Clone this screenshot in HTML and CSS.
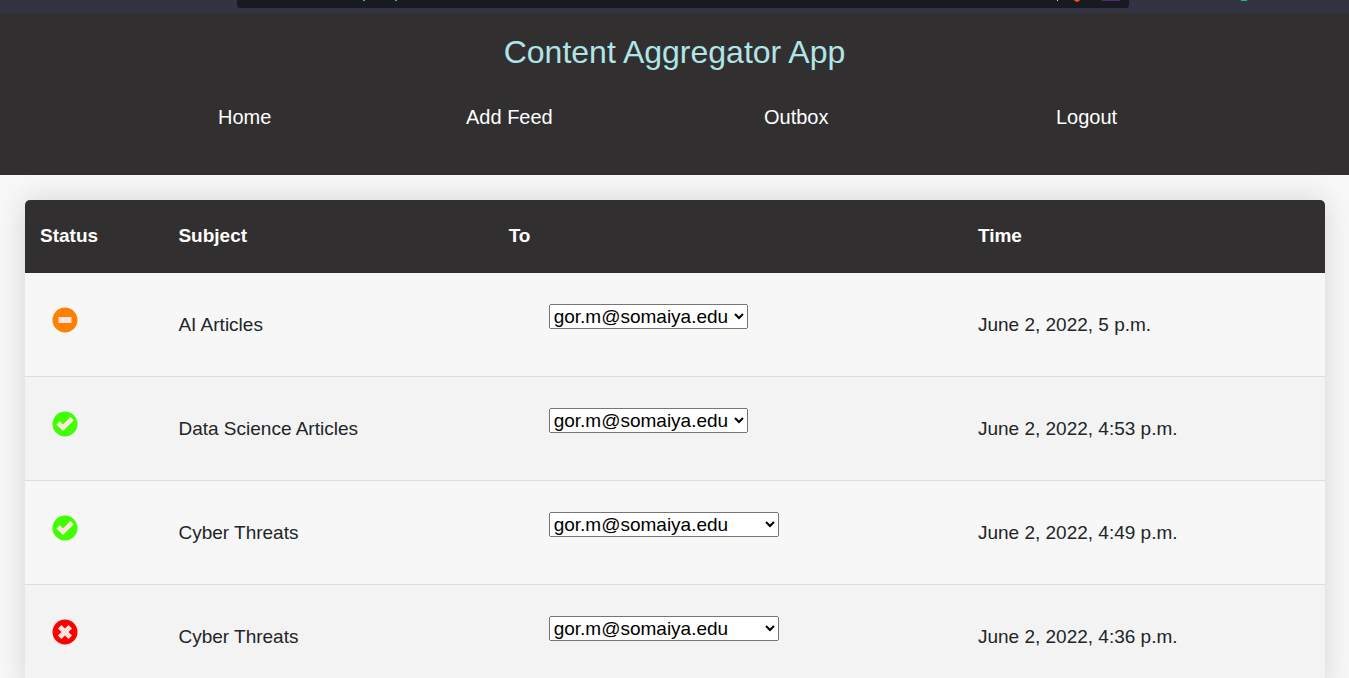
FILE: index.html
```
<!DOCTYPE html>
<html lang="en">
<head>
<meta charset="utf-8">
<title>Content Aggregator App</title>
<link rel="stylesheet" href="styles.css">
</head>
<body>
<div class="browser-bar">
  <div class="address">
    <svg class="address-marks" width="892" height="8" viewBox="0 0 892 8" aria-hidden="true">
      <path d="M126 0h2v1h-2zM158 0h2v1h-2z" fill="#8791a0"/>
      <path d="M820 0h1v1h-1z" fill="#e0e0e0"/>
      <path d="M837 0h6l-1 1-2 1-2-1z" fill="#fb5607"/>
      <path d="M865 0h18v1h-18z" fill="#4f2a75"/>
    </svg>
  </div>
  <svg class="extension" width="8" height="2" viewBox="0 0 8 2" aria-hidden="true"><path d="M0 0h8L6 1H2z" fill="#15c39a"/></svg>
</div>
<header class="header">
  <h1 class="title">Content Aggregator App</h1>
  <nav class="nav">
    <a href="#home">Home</a>
    <a href="#add">Add Feed</a>
    <a href="#outbox">Outbox</a>
    <a href="#logout">Logout</a>
  </nav>
</header>
<main class="main">
  <table class="outbox">
    <thead>
      <tr><th class="col-status">Status</th><th class="col-subject">Subject</th><th class="col-to">To</th><th>Time</th></tr>
    </thead>
    <tbody>
      <tr>
        <td><svg class="status" viewBox="0 0 26 26" role="img" aria-label="Pending"><circle cx="13" cy="13" r="12.5" fill="#ff8000"/><path d="M6.500 10h13v6h-13z" fill="#ffe4e1"/></svg></td>
        <td>AI Articles</td>
        <td><select class="recipients" aria-label="Recipients of AI Articles"><option>gor.m@somaiya.edu</option></select></td>
        <td>June 2, 2022, 5 p.m.</td>
      </tr>
      <tr>
        <td><svg class="status" viewBox="0 0 26 26" role="img" aria-label="Sent"><circle cx="13" cy="13" r="12.5" fill="#40ff00"/><path d="M4.500 13.400l3.300-3.200 3.200 3.200 7.500-7.400 3.300 3.200L11 20z" fill="#ffe4e1"/></svg></td>
        <td>Data Science Articles</td>
        <td><select class="recipients" aria-label="Recipients of Data Science Articles"><option>gor.m@somaiya.edu</option></select></td>
        <td>June 2, 2022, 4:53 p.m.</td>
      </tr>
      <tr>
        <td><svg class="status" viewBox="0 0 26 26" role="img" aria-label="Sent"><circle cx="13" cy="13" r="12.5" fill="#40ff00"/><path d="M4.500 13.400l3.300-3.200 3.200 3.200 7.500-7.400 3.300 3.200L11 20z" fill="#ffe4e1"/></svg></td>
        <td>Cyber Threats</td>
        <td><select class="recipients recipients-wide" aria-label="Recipients of Cyber Threats, 4:49 p.m."><option>gor.m@somaiya.edu</option></select></td>
        <td>June 2, 2022, 4:49 p.m.</td>
      </tr>
      <tr>
        <td><svg class="status" viewBox="0 0 26 26" role="img" aria-label="Failed"><circle cx="13" cy="13" r="12.5" fill="#ff0000"/><path d="M9.500 6L13 9.500 16.500 6 20 9.500 16.500 13 20 16.500 16.500 20 13 16.500 9.500 20 6 16.500 9.500 13 6 9.500z" fill="#ffe4e1"/></svg></td>
        <td>Cyber Threats</td>
        <td><select class="recipients recipients-wide" aria-label="Recipients of Cyber Threats, 4:36 p.m."><option>gor.m@somaiya.edu</option></select></td>
        <td>June 2, 2022, 4:36 p.m.</td>
      </tr>
    </tbody>
  </table>
</main>
</body>
</html>
```
FILE: styles.css
```
* { box-sizing: border-box; }
body {
  margin: 0;
  height: 100vh;
  overflow: hidden;
  background: #f8f8f8;
  color: #212529;
  font-family: "Liberation Sans", Arial, sans-serif;
}
.browser-bar {
  display: flex;
  height: 13px;
  padding-left: 237px;
  background: #323443;
}
.address {
  width: 892px;
  height: 8px;
  background: #181a21;
  border-radius: 0 0 3px 3px;
}
.address-marks, .extension { display: block; }
.extension { margin-left: 111px; }
.header {
  padding: 20px 0 43px;
  background: #322f30;
}
.title {
  margin: 0;
  color: #b0e5e8;
  font-size: 32px;
  font-weight: 400;
  line-height: 38px;
  text-align: center;
}
.nav {
  display: grid;
  grid-template-columns: 248fr 298fr 292fr 293fr;
  margin-top: 31px;
  padding-left: 16.16%;
}
.nav a {
  justify-self: start;
  color: #fff;
  font-size: 20px;
  line-height: 30px;
  text-decoration: none;
}
.main { padding: 25px 24px 25px 25px; }
.outbox {
  width: 100%;
  table-layout: fixed;
  border-collapse: separate;
  border-spacing: 0;
  border-radius: 5px 5px 0 0;
  overflow: hidden;
  box-shadow: 0 0 30px rgba(0, 0, 0, 0.15);
  font-size: 19px;
  line-height: 29px;
}
.outbox th {
  padding: 21px 15px 23px;
  background: #322f30;
  color: #fff;
  text-align: left;
}
.col-status { width: 10.65%; }
.col-subject { width: 25.4%; }
.col-to { width: 36.1%; }
.outbox td {
  height: 104px;
  padding: 29px 15px 30px;
  border-bottom: 1px solid #ddd;
  background: #f7f7f7;
  vertical-align: middle;
}
.outbox tr:nth-child(even) td { background: #f3f3f3; }
.status {
  display: block;
  width: 26px;
  height: 26px;
  margin: 0 0 8px 12px;
}
.recipients {
  display: block;
  width: 199px;
  height: 25px;
  margin: 0 0 16px 40px;
  font: 19px "Liberation Sans", Arial, sans-serif;
}
.recipients-wide { width: 230px; }
```
